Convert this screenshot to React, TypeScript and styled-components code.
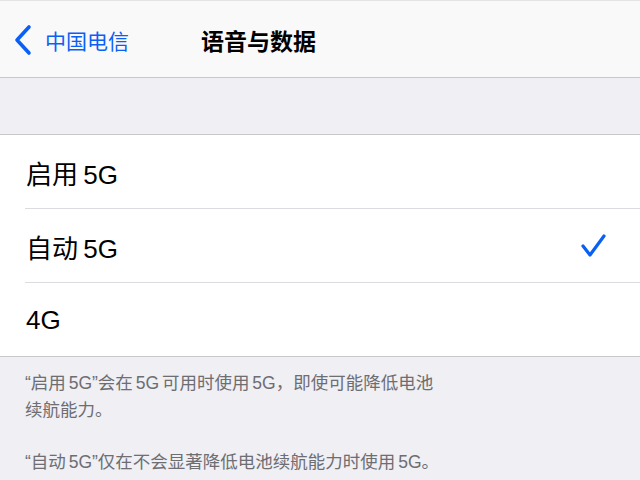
import React from 'react';
import styled, { createGlobalStyle } from 'styled-components';

const GlobalStyle = createGlobalStyle`
	html, body {
		margin: 0;
		padding: 0;
		background: #efeff4;
	}
	body {
		font-family: 'Liberation Sans', 'Noto Sans CJK SC', sans-serif;
		-webkit-font-smoothing: antialiased;
	}
`;

const Screen = styled.div`
	width: 640px;
	height: 480px;
	overflow: hidden;
	background: #efeff4;
	display: flex;
	flex-direction: column;
`;

const NavBar = styled.div`
	height: 76px;
	flex-shrink: 0;
	background: #f9f9f9;
	border-top: 1px solid #e4e4e7;
	border-bottom: 1px solid #c8c7cc;
	display: flex;
	align-items: center;
	padding-left: 13px;
	gap: 72px;
`;

const BackButton = styled.div`
	display: flex;
	align-items: center;
	gap: 12px;
	color: #0a60f5;
	font-size: 21px;
	padding-top: 2px;
`;

const Title = styled.div`
	font-size: 23px;
	font-weight: 700;
	color: #000;
	padding-top: 2px;
`;

const Spacer = styled.div`
	height: 56px;
	flex-shrink: 0;
	border-bottom: 1px solid #c8c7cc;
`;

const List = styled.div`
	background: #fff;
	border-bottom: 1px solid #c8c7cc;
	padding-left: 25px;
`;

const Row = styled.div<{ $last?: boolean }>`
	height: 73px;
	display: flex;
	align-items: center;
	justify-content: space-between;
	padding-right: 33px;
	border-bottom: ${(p) => (p.$last ? 'none' : '1px solid #dcdce0')};
	font-size: 26px;
	word-spacing: -2px;
	color: #000;
`;

const Label = styled.span`
	padding-left: 1px;
	padding-top: 2px;
`;

const Footer = styled.div`
	padding: 13px 0 0 25px;
	font-size: 17.5px;
	line-height: 27px;
	word-spacing: -2px;
	color: #6d6d72;
`;

const Note = styled.p`
	margin: 0 0 25px;
	max-width: 418px;
`;

const Chevron = () => (
	<svg width="20" height="32" viewBox="0 0 20 32">
		<path d="M16 3 L4 16 L16 29" fill="none" stroke="#0a60f5" strokeWidth="3.6" strokeLinecap="round" strokeLinejoin="round" />
	</svg>
);

const Check = () => (
	<svg width="26" height="26" viewBox="0 0 26 26">
		<path d="M2 13 L9 22 L23 3" fill="none" stroke="#0a60f5" strokeWidth="3.2" strokeLinecap="round" strokeLinejoin="round" />
	</svg>
);

const options = [
	{ label: '启用 5G', selected: false },
	{ label: '自动 5G', selected: true },
	{ label: '4G', selected: false },
];

const App = () => {
	return (
		<Screen>
			<GlobalStyle />
			<NavBar>
				<BackButton>
					<Chevron />
					<span>中国电信</span>
				</BackButton>
				<Title>语音与数据</Title>
			</NavBar>
			<Spacer />
			<List>
				{options.map((o, i) => (
					<Row key={o.label} $last={i === options.length - 1}>
						<Label>{o.label}</Label>
						{o.selected && <Check />}
					</Row>
				))}
			</List>
			<Footer>
				<Note>“启用 5G”会在 5G 可用时使用 5G，即使可能降低电池续航能力。</Note>
				<Note>“自动 5G”仅在不会显著降低电池续航能力时使用 5G。</Note>
			</Footer>
		</Screen>
	);
};

export default App;
